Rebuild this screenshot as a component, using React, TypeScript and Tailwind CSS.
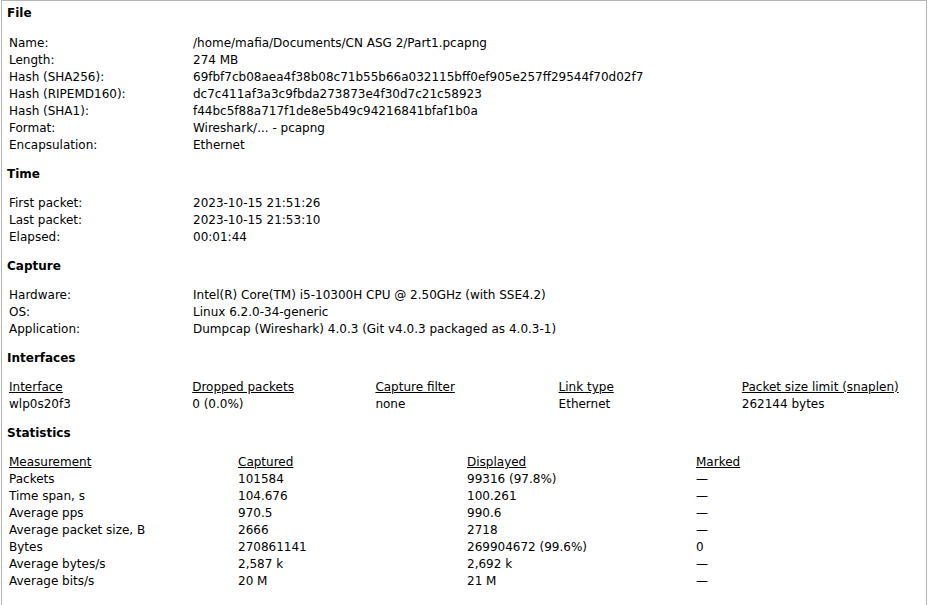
import React from "react";

const fileRows: Array<[string, string]> = [
  ["Name:", "/home/mafia/Documents/CN ASG 2/Part1.pcapng"],
  ["Length:", "274 MB"],
  ["Hash (SHA256):", "69fbf7cb08aea4f38b08c71b55b66a032115bff0ef905e257ff29544f70d02f7"],
  ["Hash (RIPEMD160):", "dc7c411af3a3c9fbda273873e4f30d7c21c58923"],
  ["Hash (SHA1):", "f44bc5f88a717f1de8e5b49c94216841bfaf1b0a"],
  ["Format:", "Wireshark/... - pcapng"],
  ["Encapsulation:", "Ethernet"],
];

const timeRows: Array<[string, string]> = [
  ["First packet:", "2023-10-15 21:51:26"],
  ["Last packet:", "2023-10-15 21:53:10"],
  ["Elapsed:", "00:01:44"],
];

const captureRows: Array<[string, string]> = [
  ["Hardware:", "Intel(R) Core(TM) i5-10300H CPU @ 2.50GHz (with SSE4.2)"],
  ["OS:", "Linux 6.2.0-34-generic"],
  ["Application:", "Dumpcap (Wireshark) 4.0.3 (Git v4.0.3 packaged as 4.0.3-1)"],
];

const ifaceHeaders = ["Interface", "Dropped packets", "Capture filter", "Link type", "Packet size limit (snaplen)"];
const ifaceRow = ["wlp0s20f3", "0 (0.0%)", "none", "Ethernet", "262144 bytes"];

const statHeaders = ["Measurement", "Captured", "Displayed", "Marked"];
const statRows = [
  ["Packets", "101584", "99316 (97.8%)", "—"],
  ["Time span, s", "104.676", "100.261", "—"],
  ["Average pps", "970.5", "990.6", "—"],
  ["Average packet size, B", "2666", "2718", "—"],
  ["Bytes", "270861141", "269904672 (99.6%)", "0"],
  ["Average bytes/s", "2,587 k", "2,692 k", "—"],
  ["Average bits/s", "20 M", "21 M", "—"],
];

const Heading = ({ title, first }: { title: string; first?: boolean }) => (
  <div className={`font-bold h-[17px] ${first ? "" : "mt-[12px]"}`}>{title}</div>
);

const KeyValue = ({ rows, first }: { rows: Array<[string, string]>; first?: boolean }) => (
  <div className={first ? "mt-[13px]" : "mt-[12px]"}>
    {rows.map(([k, v]) => (
      <div key={k} className="grid grid-cols-[184px_1fr] h-[17px]">
        <span className="px-[2px] whitespace-nowrap">{k}</span>
        <span className="px-[2px] whitespace-nowrap">{v}</span>
      </div>
    ))}
  </div>
);

export default function App() {
  return (
    <div className="h-[605px] w-[930px] overflow-hidden bg-white">
      <div
        className="ml-[1px] w-[926px] h-[640px] border-l border-t border-r border-[#b4b4b4] bg-white pl-[5px] pr-[3px] pt-[4px] text-[12px] leading-[17px] text-black"
        style={{ fontFamily: '"DejaVu Sans", sans-serif' }}
      >
        <Heading title="File" first />
        <KeyValue rows={fileRows} first />

        <Heading title="Time" />
        <KeyValue rows={timeRows} />

        <Heading title="Capture" />
        <KeyValue rows={captureRows} />

        <Heading title="Interfaces" />
        <div className="mt-[12px]">
          <div className="grid grid-cols-5 h-[17px]">
            {ifaceHeaders.map((h) => (
              <span key={h} className="px-[2px] whitespace-nowrap">
                <span className="underline">{h}</span>
              </span>
            ))}
          </div>
          <div className="grid grid-cols-5 h-[17px]">
            {ifaceRow.map((c) => (
              <span key={c} className="px-[2px] whitespace-nowrap">{c}</span>
            ))}
          </div>
        </div>

        <Heading title="Statistics" />
        <div className="mt-[12px]">
          <div className="grid grid-cols-4 h-[17px]">
            {statHeaders.map((h) => (
              <span key={h} className="px-[2px] whitespace-nowrap">
                <span className="underline">{h}</span>
              </span>
            ))}
          </div>
          {statRows.map((row) => (
            <div key={row[0]} className="grid grid-cols-4 h-[17px]">
              {row.map((c, i) => (
                <span key={i} className="px-[2px] whitespace-nowrap">{c}</span>
              ))}
            </div>
          ))}
        </div>
      </div>
    </div>
  );
}
